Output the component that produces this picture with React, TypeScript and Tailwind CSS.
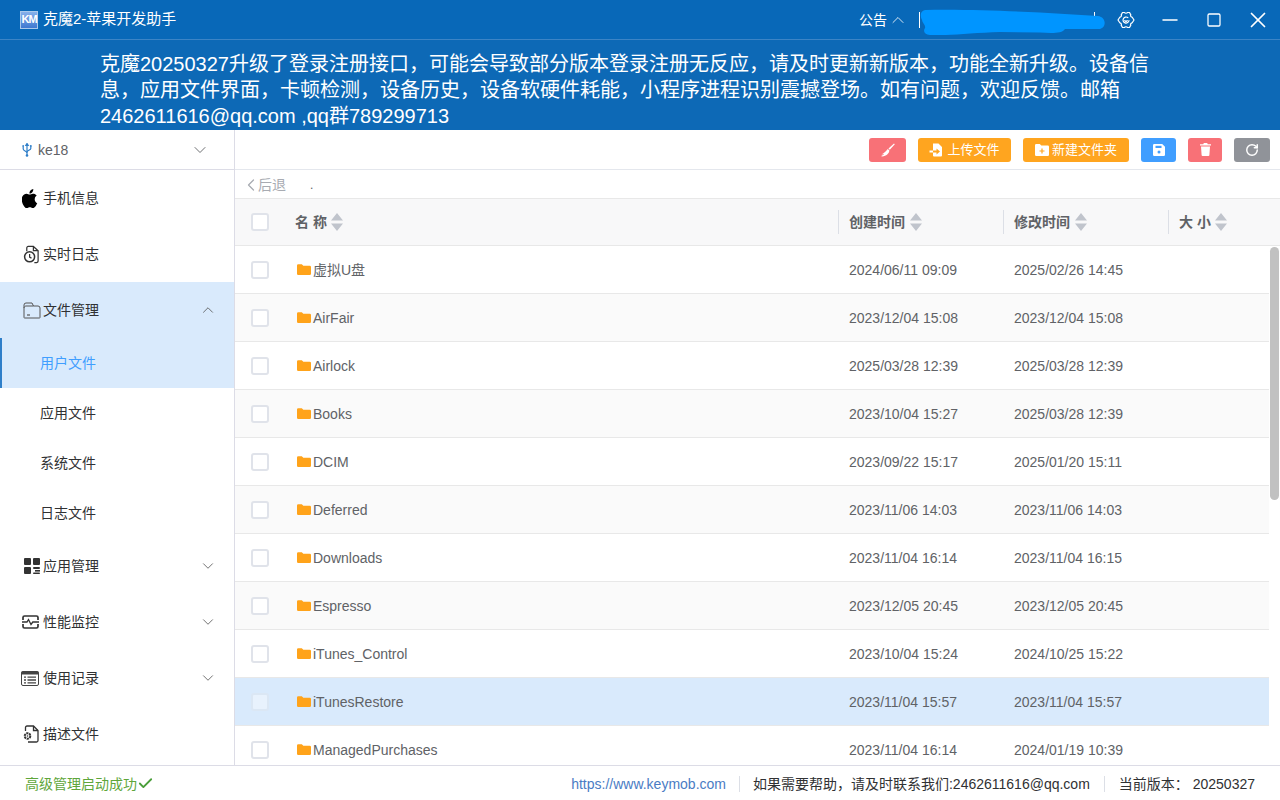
import React from "react";
import { ChevronDown, ChevronUp, ChevronLeft, Minus, Square, X, Check, RotateCw } from "lucide-react";

const font = { fontFamily: '"Liberation Sans","Noto Sans CJK SC",sans-serif' };

const rows = [
  ["虚拟U盘", "2024/06/11 09:09", "2025/02/26 14:45"],
  ["AirFair", "2023/12/04 15:08", "2023/12/04 15:08"],
  ["Airlock", "2025/03/28 12:39", "2025/03/28 12:39"],
  ["Books", "2023/10/04 15:27", "2025/03/28 12:39"],
  ["DCIM", "2023/09/22 15:17", "2025/01/20 15:11"],
  ["Deferred", "2023/11/06 14:03", "2023/11/06 14:03"],
  ["Downloads", "2023/11/04 16:14", "2023/11/04 16:15"],
  ["Espresso", "2023/12/05 20:45", "2023/12/05 20:45"],
  ["iTunes_Control", "2023/10/04 15:24", "2024/10/25 15:22"],
  ["iTunesRestore", "2023/11/04 15:57", "2023/11/04 15:57"],
  ["ManagedPurchases", "2023/11/04 16:14", "2024/01/19 10:39"],
];

function Apple() {
  return (
    <svg width="16" height="19" viewBox="3.5 1.5 17 20.5" fill="#000">
      <path d="M17.05 12.54c-.03-2.6 2.12-3.85 2.22-3.91-1.21-1.77-3.09-2.01-3.76-2.04-1.6-.16-3.12.94-3.93.94-.81 0-2.06-.92-3.39-.89-1.74.03-3.35 1.01-4.25 2.57-1.81 3.14-.46 7.8 1.3 10.35.86 1.25 1.89 2.65 3.24 2.6 1.3-.05 1.79-.84 3.36-.84 1.57 0 2.01.84 3.39.81 1.4-.03 2.28-1.27 3.14-2.53.99-1.45 1.4-2.85 1.42-2.92-.03-.01-2.71-1.04-2.74-4.14zM14.47 4.9c.72-.87 1.2-2.08 1.07-3.28-1.03.04-2.28.69-3.02 1.55-.66.77-1.24 2-1.09 3.18 1.15.09 2.33-.58 3.04-1.45z" />
    </svg>
  );
}
function UsbIcon() {
  return (
    <svg width="10" height="14" viewBox="0 0 10 14" fill="none" stroke="#2f7fc9" strokeWidth="1.2" className="mr-[6px]">
      <path d="M5 1v12" />
      <path d="M5 0.500L3.800 2.500h2.400z" fill="#2f7fc9" />
      <path d="M1.200 3.500V6c0 1.800 3.800 2.200 3.800 4" />
      <path d="M8.800 3.500V5.500c0 1.600-3.800 2-3.800 3.500" />
      <rect x="0.400" y="2.200" width="1.600" height="1.600" fill="#2f7fc9" stroke="none" />
      <circle cx="8.800" cy="3" r="1" fill="#2f7fc9" stroke="none" />
      <circle cx="5" cy="12.500" r="1.300" fill="#2f7fc9" stroke="none" />
    </svg>
  );
}
function Gear() {
  return (
    <svg width="18" height="18" viewBox="0 0 18 18" fill="none" stroke="#fff" strokeWidth="1.200" strokeLinejoin="round" strokeLinecap="round" className="ml-[22px]">
      <path d="M5.500 1.500h2c.4 1 2.600 1 3 0h2l1.300 2.400c-.7.900.3 2.300 1.400 2.300L17 9l-1.800 2.800c-1.100 0-2.100 1.400-1.400 2.300l-1.300 2.400h-2c-.4-1-2.600-1-3 0h-2l-1.300-2.400c.7-.9-.3-2.300-1.400-2.300L1 9l1.800-2.800c1.100 0 2.100-1.400 1.400-2.300z" />
      <path d="M12 9.500A3 3 0 1 1 10.800 6.600" />
      <path d="M7.800 9.500a1.300 1.300 0 0 0 2.400 0" />
    </svg>
  );
}
function LogIcon() {
  return (
    <svg width="17" height="19" viewBox="0 0 18 19" fill="none" stroke="#333" strokeWidth="1.300" className="ml-px">
      <path d="M4 6V2.500a1.500 1.500 0 0 1 1.500-1.500H11l5 4.500v11a1.500 1.500 0 0 1-1.500 1.500H12" />
      <path d="M11 1v4.500h5" />
      <circle cx="7" cy="12" r="5.300" strokeWidth="1.600" />
      <path d="M7 9v3.300l2 1" />
    </svg>
  );
}
function FolderOutline() {
  return (
    <svg width="18" height="17" viewBox="0 0 18 17" fill="none" stroke="#555" strokeWidth="1" className="ml-px">
      <path d="M1 15V3a2 2 0 0 1 2-2h6l1.500 3H15a2 2 0 0 1 2 2v9.500a.5.5 0 0 1-.5.5H1.500a.5.5 0 0 1-.5-.5z" />
      <path d="M1 6c0-1 1-2 2-2h7.500" />
      <path d="M4 13h3" strokeWidth="1.200" />
    </svg>
  );
}
function AppsIcon() {
  return (
    <svg width="16" height="16" viewBox="0 0 16 16" fill="#333" className="ml-[2px]">
      <rect x="0" y="0" width="7" height="7" rx="1" />
      <rect x="9" y="0" width="7" height="7" rx="1" />
      <rect x="0" y="9" width="7" height="7" rx="1" />
      <rect x="9" y="9" width="7" height="2" rx="1" />
      <rect x="11" y="12" width="5" height="1.600" />
      <rect x="9" y="14.400" width="7" height="1.600" rx=".8" />
    </svg>
  );
}
function MonitorIcon() {
  return (
    <svg width="17" height="14" viewBox="0 0 17 14" fill="none" stroke="#333" strokeWidth="1.700">
      <path d="M1 5V2.500A1.500 1.500 0 0 1 2.500 1h12A1.500 1.500 0 0 1 16 2.500V5" />
      <path d="M1 9v2.500A1.500 1.500 0 0 0 2.500 13h12a1.500 1.500 0 0 0 1.500-1.500V9" />
      <path d="M0 7h5l1.500-2.500 2.500 5 1.800-2.500H17" strokeWidth="1.300" />
    </svg>
  );
}
function RecordIcon() {
  return (
    <svg width="18" height="15" viewBox="0 0 18 15" className="-ml-px">
      <rect x="0.500" y="0.500" width="17" height="14" rx="1.500" fill="none" stroke="#444" strokeWidth="1" />
      <rect x="0.500" y="0.500" width="17" height="3" fill="#444" />
      <path d="M3 6.200h2M6.500 6.200H15M3 9h2M6.500 9H15M3 11.800h2M6.500 11.800H15" stroke="#444" strokeWidth="1.300" />
    </svg>
  );
}
function ProfileIcon() {
  return (
    <svg width="16" height="18" viewBox="0 0 16 18" fill="none" stroke="#333" strokeWidth="1.300" className="ml-px">
      <path d="M2.500 6V2.500A1.500 1.500 0 0 1 4 1h6.500L15 5.500V15.500a1.500 1.500 0 0 1-1.500 1.500H5" />
      <path d="M10.500 1v4.500H15" />
      <circle cx="4.500" cy="11" r="2.800" strokeWidth="2" strokeDasharray="2.200 .7" />
      <circle cx="4.500" cy="11" r=".8" fill="#333" stroke="none" />
    </svg>
  );
}
function Folder() {
  return (
    <svg width="14" height="11" viewBox="0 0 14 11" className="shrink-0">
      <path d="M0 1.500A1.300 1.300 0 0 1 1.300.2h3.500l1.500 1.500h6.400A1.300 1.300 0 0 1 14 3v6.700A1.300 1.300 0 0 1 12.700 11H1.300A1.300 1.300 0 0 1 0 9.700z" fill="#ffa31a" />
    </svg>
  );
}
function Sort() {
  return (
    <svg width="12" height="18" viewBox="0 0 12 18" className="shrink-0" fill="#c0c4cc">
      <path d="M6 0l6 7.500H0zM0 10.500h12L6 18z" />
    </svg>
  );
}
function Broom() {
  return (
    <svg width="14" height="14" viewBox="0 0 14 14" fill="#fff">
      <path d="M13 0.500l.8.8-5 5.400-1.300-1.200z" />
      <path d="M6.800 6l1.600 1.500c-.3 3-3 5.500-7.400 6l-.9-.5c1.600-.6 2.500-1.400 3-2.300-.9.500-1.700.7-2.500.7 2.500-1.200 4.600-3.300 6.200-5.400z" />
    </svg>
  );
}
function UploadIcon() {
  return (
    <svg width="14" height="14" viewBox="0 0 14 14" fill="#fff">
      <path d="M4 0.500h5.500L13 4v8.500a1 1 0 0 1-1 1H5a1 1 0 0 1-1-1v-3h3.500v2L11 8.500 7.500 5.500v2H4z" />
      <path d="M0.500 7.500H4v2H0.500z" />
    </svg>
  );
}
function NewFolderIcon() {
  return (
    <svg width="14" height="12" viewBox="0 0 14 12" fill="#fff">
      <path d="M0 1.200A1.200 1.200 0 0 1 1.200 0h3.600l1.500 1.500h6.500A1.200 1.200 0 0 1 14 2.700v8.100A1.200 1.200 0 0 1 12.800 12H1.200A1.200 1.200 0 0 1 0 10.800z" />
      <path d="M6.400 4.500h1.200v1.900h1.900v1.200H7.600v1.900H6.400V7.600H4.500V6.400h1.900z" fill="#ffa51f" />
    </svg>
  );
}
function FloppyIcon() {
  return (
    <svg width="12" height="12" viewBox="0 0 12 12">
      <path d="M1.200 0h8L12 2.800v8A1.200 1.200 0 0 1 10.800 12H1.200A1.200 1.200 0 0 1 0 10.800V1.200A1.200 1.200 0 0 1 1.200 0z" fill="#fff" />
      <rect x="2.500" y="1.800" width="6" height="2.200" fill="#409eff" />
      <circle cx="6" cy="8" r="1.500" fill="#409eff" />
    </svg>
  );
}
function TrashIcon() {
  return (
    <svg width="11" height="13" viewBox="0 0 11 13" fill="#fff">
      <path d="M3.800 0h3.400l.5 1.200H11v1.300H0V1.200h3.300z" />
      <path d="M1 3.400h9L9.400 12a1 1 0 0 1-1 1H2.600a1 1 0 0 1-1-1z" />
    </svg>
  );
}
function Box() {
  return <span className="block w-[18px] h-[18px] rounded-[3px] border-2 border-[#e0e3ea] bg-white" />;
}
function Btn({ w, bg, children }: { w: string; bg: string; children: React.ReactNode }) {
  return <button className={`${w} ${bg} h-6 rounded-[3px] flex items-center justify-center gap-[3px] text-white text-[13px]`}>{children}</button>;
}
function Item({ icon, label, arrow, active }: { icon: React.ReactNode; label: string; arrow?: "up" | "down"; active?: boolean }) {
  return (
    <div className={`h-14 flex items-center pl-[22px] pr-[17px] text-sm text-[#303133] ${active ? "bg-[#d9eafc]" : ""}`}>
      <span className="w-[20px] flex justify-start shrink-0">{icon}</span>
      <span className="ml-px flex-1">{label}</span>
      {arrow === "up" && <ChevronUp size={18} strokeWidth={1.100} color="#555" />}
      {arrow === "down" && <ChevronDown size={18} strokeWidth={1.100} color="#555" />}
    </div>
  );
}
function Sub({ label, active }: { label: string; active?: boolean }) {
  return (
    <div className={`h-[50px] flex items-center text-sm ${active ? "bg-[#d9eafc] text-[#409eff] border-l-2 border-[#2f7fc9] pl-[38px]" : "text-[#303133] pl-10"}`}>
      {label}
    </div>
  );
}

export default function App() {
  return (
    <div className="w-[1280px] h-[800px] overflow-hidden flex flex-col bg-white" style={font}>
      <header className="h-10 shrink-0 bg-[#0868b8] border-b border-[#3b84c6] flex items-center text-white relative">
        <span className="ml-5 w-[18px] h-[18px] border border-[#a9c8ea] bg-gradient-to-b from-[#86b0ea] to-[#3f78d0] text-[11px] font-bold flex items-center justify-center tracking-[-1px]">KM</span>
        <span className="ml-[5px] text-[15px]">克魔2-苹果开发助手</span>
        <div className="flex-1" />
        <span className="text-sm mr-px">公告</span>
        <ChevronUp size={20} strokeWidth={1} />
        <span className="ml-[11px] w-px h-4 bg-white" />
        <span className="ml-[174px] w-px h-4 bg-white" />
        <Gear />
        <Minus size={24} strokeWidth={1.500} className="ml-[23px]" />
        <Square size={16} strokeWidth={1.900} className="ml-[24px]" />
        <X size={26} strokeWidth={1.600} className="ml-[23px] mr-[9px]" />
        <svg className="absolute left-[920px] top-[9px]" width="186" height="26" viewBox="0 0 186 26" fill="#0095ff">
          <path d="M5 1C40 0 87 2 120 3.500L153 5.500 178 7c8 1 9 11 2 13l-35 0c-3 5-15 4-25 3.500L80 23c-30 1-55 4-70 3-6-1-7-4-5-7 1-3-3-5-3-8C0 7 0 2 5 1z" />
        </svg>
      </header>
      <div className="h-[90px] shrink-0 bg-[#0d69b6] pl-[100px] pr-[128px] pt-[11px] text-white text-xl leading-[26px]">
        克魔20250327升级了登录注册接口，可能会导致部分版本登录注册无反应，请及时更新新版本，功能全新升级。设备信息，应用文件界面，卡顿检测，设备历史，设备软硬件耗能，小程序进程识别震撼登场。如有问题，欢迎反馈。邮箱2462611616@qq.com ,qq群789299713
      </div>
      <div className="flex-1 min-h-0 flex">
        <aside className="w-[235px] shrink-0 border-r border-[#dcdce6] flex flex-col overflow-hidden">
          <div className="h-10 shrink-0 border-b border-[#dcdce6] flex items-center pl-[22px] pr-6 text-sm text-[#606266]">
            <UsbIcon />
            <span className="flex-1">ke18</span>
            <ChevronDown size={20} strokeWidth={1.100} color="#606266" />
          </div>
          <Item icon={<Apple />} label="手机信息" />
          <Item icon={<LogIcon />} label="实时日志" />
          <Item icon={<FolderOutline />} label="文件管理" arrow="up" active />
          <Sub label="用户文件" active />
          <Sub label="应用文件" />
          <Sub label="系统文件" />
          <Sub label="日志文件" />
          <Item icon={<AppsIcon />} label="应用管理" arrow="down" />
          <Item icon={<MonitorIcon />} label="性能监控" arrow="down" />
          <Item icon={<RecordIcon />} label="使用记录" arrow="down" />
          <Item icon={<ProfileIcon />} label="描述文件" />
        </aside>
        <main className="flex-1 min-w-0 flex flex-col overflow-hidden">
          <div className="h-10 shrink-0 border-b border-[#e4e7ed] flex items-center justify-end gap-3 pr-[10px]">
            <Btn w="w-[37px]" bg="bg-[#f87177]"><Broom /></Btn>
            <Btn w="w-[93px]" bg="bg-[#ffa51f]"><UploadIcon /><span className="ml-px">上传文件</span></Btn>
            <Btn w="w-[106px]" bg="bg-[#ffa51f]"><NewFolderIcon />新建文件夹</Btn>
            <Btn w="w-[35px]" bg="bg-[#409eff]"><FloppyIcon /></Btn>
            <Btn w="w-[34px]" bg="bg-[#f87177]"><TrashIcon /></Btn>
            <Btn w="w-9" bg="bg-[#909399]"><RotateCw size={14} strokeWidth={2.500} /></Btn>
          </div>
          <div className="h-[28px] shrink-0 flex items-center pl-[6px] pt-[2px] text-sm text-[#a8abb2]">
            <ChevronLeft size={20} strokeWidth={1.500} className="-mr-[3px]" />
            <span>后退</span>
            <span className="ml-6 text-[#606266] text-xs">.</span>
          </div>
          <div className="h-12 shrink-0 bg-[#f8f8f9] border-y border-[#e8e8e8] flex items-center text-sm font-bold text-[#606266]">
            <span className="w-[60px] pl-4 shrink-0"><Box /></span>
            <div className="w-[543px] shrink-0 flex items-center gap-1">名 称<Sort /></div>
            <div className="w-[165px] shrink-0 h-6 border-l border-[#dcdfe6] pl-[10px] flex items-center gap-[5px]">创建时间<Sort /></div>
            <div className="w-[165px] shrink-0 h-6 border-l border-[#dcdfe6] pl-[10px] flex items-center gap-[5px]">修改时间<Sort /></div>
            <div className="flex-1 h-6 border-l border-[#dcdfe6] pl-[10px] flex items-center gap-1">大 小<Sort /></div>
          </div>
          <div className="flex-1 min-h-0 flex">
            <div className="flex-1 min-w-0 overflow-hidden">
              {rows.map((r, i) => (
                <div key={r[0]} className={`h-12 border-b border-[#e8e8e8] flex items-center text-sm text-[#606266] ${i === 9 ? "bg-[#d9eafc]" : i % 2 === 1 ? "bg-[#fafafa]" : "bg-white"}`}>
                  <span className={`w-[62px] pl-4 shrink-0 ${i === 9 ? "opacity-40" : ""}`}><Box /></span>
                  <div className="w-[552px] shrink-0 flex items-center gap-[2px]">
                    <Folder />
                    <span>{r[0]}</span>
                  </div>
                  <div className="w-[165px] shrink-0">{r[1]}</div>
                  <div className="flex-1">{r[2]}</div>
                </div>
              ))}
            </div>
            <div className="w-[11px] shrink-0 bg-white flex flex-col pl-[1px]">
              <div className="h-[253px] w-[9px] bg-[#c1c1c1] rounded-full mt-px" />
            </div>
          </div>
        </main>
      </div>
      <footer className="h-[35px] shrink-0 border-t border-[#dcdce6] flex items-center pt-px text-sm text-[#303133] pr-[25px]">
        <span className="ml-[25px] text-[#5ea63a] flex items-center">高级管理启动成功<Check size={17} strokeWidth={2.600} color="#4a9e3a" /></span>
        <div className="flex-1" />
        <span className="text-[#4a7cc4]">https://www.keymob.com</span>
        <span className="mx-[13px] w-px h-4 bg-[#dcdfe6]" />
        <span>如果需要帮助，请及时联系我们:2462611616@qq.com</span>
        <span className="mx-[14px] w-px h-4 bg-[#dcdfe6]" />
        <span>当前版本： 20250327</span>
      </footer>
    </div>
  );
}
